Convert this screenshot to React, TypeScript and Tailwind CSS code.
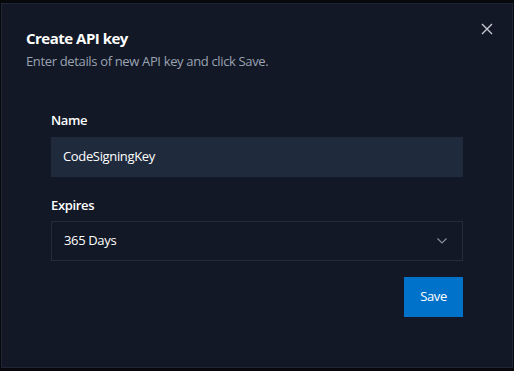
import React from "react";

export default function App() {
  return (
    <div
      className="w-[514px] h-[371px] bg-[#07080b] overflow-hidden pt-[3px] pl-[1px]"
      style={{ fontFamily: '"Open Sans", "Noto Sans", sans-serif' }}
    >
      <div className="relative w-[512px] h-[365px] bg-[#121826] border border-[#1e2636]">
        <button className="absolute right-[19px] top-[19px] text-[#c5cad3]">
          <svg width="12" height="12" viewBox="0 0 12 12" fill="none" stroke="currentColor" strokeWidth="1.4">
            <path d="M1 1L11 11M11 1L1 11" />
          </svg>
        </button>
        <div className="pl-[24px] pt-[24px]">
          <h2 className="text-[15px] font-bold text-white leading-[20px] tracking-[-0.5px]">Create API key</h2>
          <p className="mt-[4px] text-[13px] text-[#9aa3b2] leading-[18px] tracking-[-0.35px]">
            Enter details of new API key and click Save.
          </p>
        </div>
        <div className="pl-[49px] pr-[49px] mt-[41px]">
          <label className="block text-[13px] font-semibold text-white leading-[18px] tracking-[-0.35px]">Name</label>
          <div className="mt-[8px] h-[40px] bg-[#1f2a3c] flex items-center px-[12px] text-[13px] text-white tracking-[-0.35px]">
            CodeSigningKey
          </div>
          <label className="block mt-[19px] text-[13px] font-semibold text-white leading-[18px] tracking-[-0.35px]">Expires</label>
          <div className="mt-[7px] h-[40px] border border-[#232c3b] flex items-center justify-between pl-[12px] pr-[15px] text-[13px] text-white tracking-[-0.35px]">
            <span>365 Days</span>
            <svg width="10" height="6" viewBox="0 0 10 6" fill="none" stroke="#8a93a3" strokeWidth="1.1">
              <path d="M0.5 0.5L5 5L9.5 0.5" />
            </svg>
          </div>
          <div className="flex justify-end mt-[16px]">
            <button className="w-[59px] h-[40px] bg-[#0072c9] text-white text-[13px] tracking-[-0.35px]">Save</button>
          </div>
        </div>
      </div>
    </div>
  );
}
